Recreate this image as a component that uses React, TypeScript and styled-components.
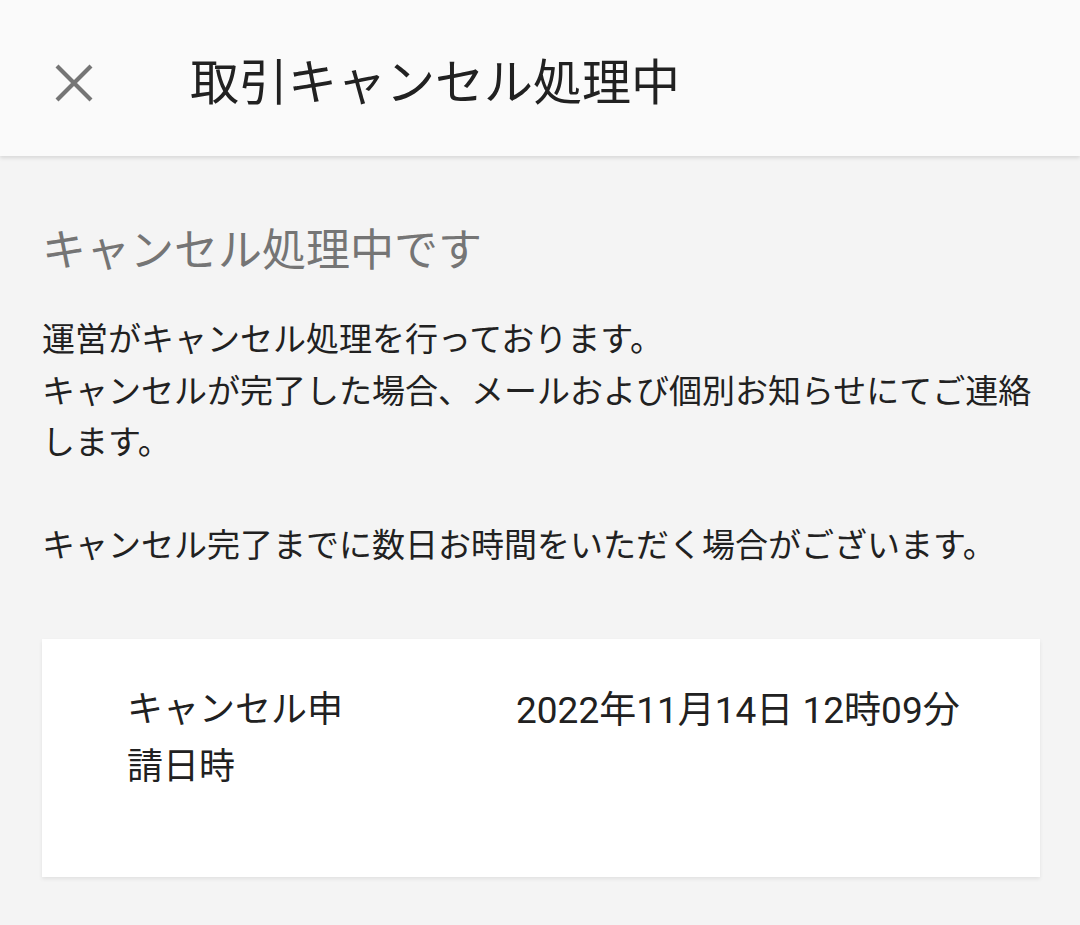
import React from "react";
import styled, { createGlobalStyle } from "styled-components";

const Global = createGlobalStyle`
  html, body {
    margin: 0;
    padding: 0;
    background: #f4f4f4;
  }
  body {
    font-family: Roboto, "Noto Sans CJK JP", sans-serif;
    color: #212121;
  }
`;

const Page = styled.div`
  min-height: 925px;
  background: #f4f4f4;
`;

const Header = styled.header`
  height: 156px;
  box-sizing: border-box;
  padding-top: 12px;
  background: #fafafa;
  display: flex;
  align-items: center;
  box-shadow: 0 2px 4px rgba(0, 0, 0, 0.12);
  position: relative;
  z-index: 1;
`;

const CloseButton = styled.button`
  width: 62px;
  height: 62px;
  margin-left: 43px;
  margin-top: -2px;
  padding: 0;
  border: none;
  background: transparent;
  display: flex;
  align-items: center;
  justify-content: center;
  color: #757575;
`;

const Title = styled.h1`
  margin: 0 0 0 85px;
  font-size: 49px;
  line-height: 64px;
  font-weight: 400;
  color: #212121;
`;

const Main = styled.main`
  padding: 65px 40px 40px 42px;
`;

const Heading = styled.h2`
  margin: 0;
  font-size: 44px;
  line-height: 60px;
  font-weight: 400;
  color: #757575;
`;

const Message = styled.p`
  margin: 33px 0 0;
  font-size: 33px;
  line-height: 51.5px;
  color: #212121;
`;

const Card = styled.section`
  margin-top: 67px;
  background: #ffffff;
  box-shadow: 0 2px 4px rgba(0, 0, 0, 0.08);
  padding: 43px 40px 81px 85px;
  display: grid;
  grid-template-columns: 230px 1fr;
  column-gap: 159px;
`;

const Label = styled.div`
  font-size: 36px;
  line-height: 57px;
  color: #212121;
`;

const Value = styled.div`
  font-size: 37px;
  line-height: 57px;
  color: #212121;
`;

const CloseIcon = () => (
  <svg width="38" height="38" viewBox="0 0 38 38" aria-hidden="true">
    <path d="M2 2 L36 36 M36 2 L2 36" stroke="currentColor" strokeWidth="4.2" />
  </svg>
);

export default function App() {
  return (
    <Page>
      <Global />
      <Header>
        <CloseButton aria-label="閉じる">
          <CloseIcon />
        </CloseButton>
        <Title>取引キャンセル処理中</Title>
      </Header>
      <Main>
        <Heading>キャンセル処理中です</Heading>
        <Message>
          運営がキャンセル処理を行っております。
          <br />
          キャンセルが完了した場合、メールおよび個別お知らせにてご連絡します。
          <br />
          <br />
          キャンセル完了までに数日お時間をいただく場合がございます。
        </Message>
        <Card>
          <Label>キャンセル申請日時</Label>
          <Value>2022年11月14日 12時09分</Value>
        </Card>
      </Main>
    </Page>
  );
}
